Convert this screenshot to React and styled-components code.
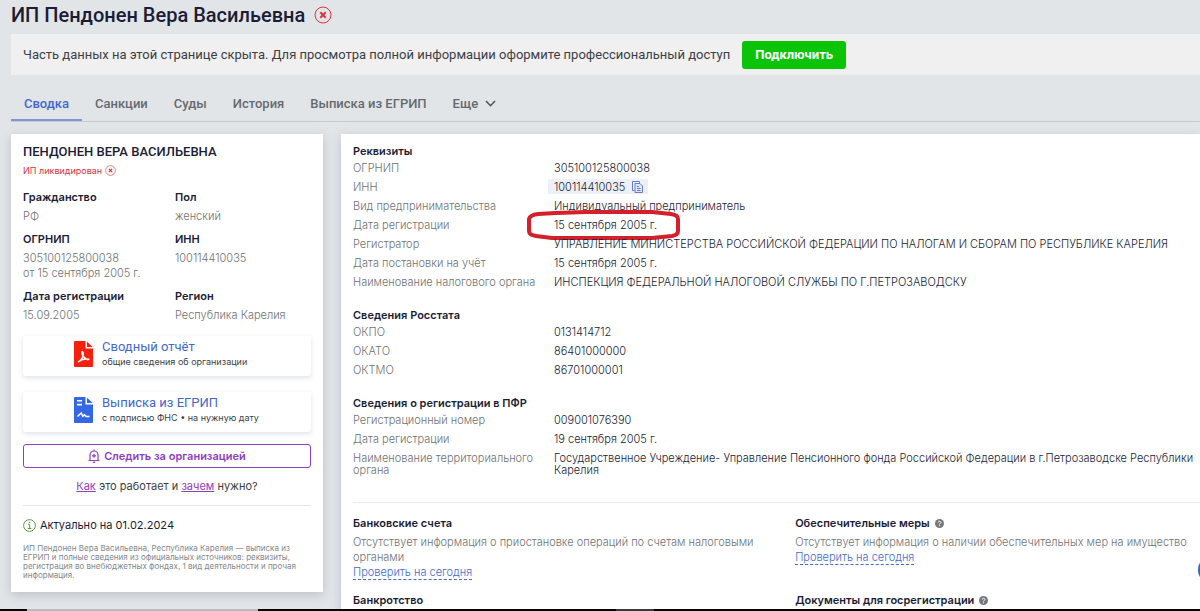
import React from "react";
import styled, { createGlobalStyle } from "styled-components";

const color = {
  page: "#e2e5e8",
  ink: "#1b1c36",
  text: "#3c3e46",
  muted: "#6f7275",
  blue: "#4468d0",
  violet: "#9040bf",
  red: "#d8353d",
};

const display = `Roboto, "Liberation Sans", sans-serif`;

const GlobalStyle = createGlobalStyle`
  *, *::before, *::after { box-sizing: border-box; }
  html, body { margin: 0; height: 100%; overflow: hidden; }
  body {
    background: ${color.page};
    color: ${color.ink};
    font-family: Inter, Roboto, "Liberation Sans", sans-serif;
    font-size: 11px;
  }
  h1, h2, h3, p, dl, dd, dt { margin: 0; }
  button { font-family: inherit; cursor: pointer; }
`;

const Shell = styled.div`
  display: flex;
  flex-direction: column;
  height: 100vh;
`;

const Page = styled.div`
  flex: 1;
  min-height: 0;
  overflow: hidden;
  padding: 3px 0 0 11px;
`;

const Header = styled.header`
  display: flex;
  align-items: center;
  gap: 9px;
  height: 24px;
  font-family: ${display};
`;

const PageTitle = styled.h1`
  font-size: 20px;
  line-height: 24px;
  font-weight: 500;
`;

const Banner = styled.div`
  display: flex;
  align-items: center;
  gap: 12px;
  height: 41px;
  margin-top: 7px;
  padding: 0 12px;
  background: #f0f0f0;
  color: ${color.text};
  font-family: ${display};
  font-size: 13px;
`;

const ConnectButton = styled.button`
  height: 28px;
  padding: 0 13px;
  border: 0;
  border-radius: 3px;
  background: #0bc407;
  color: #fff;
  font-size: 13px;
  font-weight: 700;
`;

const Tabs = styled.nav`
  display: flex;
  align-items: flex-end;
  height: 47px;
  border-bottom: 1px solid #c6cbd1;
  font-family: ${display};
`;

const Tab = styled.a`
  display: flex;
  align-items: center;
  gap: 7px;
  height: 36px;
  padding: 2px 13px 0;
  border-bottom: 2px solid ${(p) => (p.$active ? "#7f98d2" : "transparent")};
  color: ${(p) => (p.$active ? color.blue : "#666a6e")};
  font-size: 13px;
  font-weight: 500;
  text-decoration: none;
`;

const Columns = styled.main`
  display: flex;
  align-items: flex-start;
  gap: 18px;
  margin-top: 12px;
`;

const Card = styled.aside`
  flex: 0 0 312px;
  padding: 10px 12px 12px;
  background: #fff;
  box-shadow: 0 3px 10px rgba(60, 70, 90, 0.22);
`;

const CardTitle = styled.h2`
  font-family: ${display};
  font-size: 13px;
  line-height: 16px;
  font-weight: 500;
`;

const Status = styled.p`
  display: flex;
  align-items: center;
  gap: 3px;
  height: 12px;
  margin-top: 4px;
  color: ${color.red};
  font-size: 9px;
`;

const Facts = styled.dl`
  display: grid;
  grid-template-columns: 152px 1fr;
  row-gap: 8px;
  margin-top: 14px;
`;

const FactName = styled.dt`
  margin-bottom: 5px;
  font-size: 11px;
  line-height: 14px;
  font-weight: 600;
`;

const FactValue = styled.dd`
  color: ${color.muted};
  font-size: 11px;
  line-height: 15px;
  font-weight: 300;
`;

const Reports = styled.div`
  display: grid;
  gap: 16px;
  margin: 13px 0 12px;
`;

const Report = styled.a`
  display: flex;
  align-items: center;
  gap: 9px;
  height: 40px;
  padding: 0 0 4px 51px;
  border-radius: 3px;
  box-shadow: 0 2px 5px rgba(60, 80, 110, 0.16);
  color: ${color.text};
  text-decoration: none;
`;

const ReportName = styled.span`
  display: block;
  color: ${color.blue};
  font-family: ${display};
  font-size: 13px;
  line-height: 16px;
`;

const ReportNote = styled.span`
  display: block;
  font-size: 9px;
  line-height: 14px;
`;

const FollowButton = styled.button`
  display: flex;
  align-items: center;
  justify-content: center;
  gap: 4px;
  width: 100%;
  height: 24px;
  padding: 0;
  border: 1px solid ${color.violet};
  border-radius: 3px;
  background: #fff;
  color: ${color.violet};
  font-size: 11px;
  font-weight: 600;
`;

const HowLine = styled.p`
  margin-top: 10px;
  padding-bottom: 11px;
  border-bottom: 1px solid #e6e6e9;
  color: ${color.text};
  font-size: 11px;
  line-height: 16px;
  text-align: center;

  a { color: ${color.violet}; }
`;

const Actual = styled.p`
  display: flex;
  align-items: center;
  gap: 4px;
  height: 16px;
  margin-top: 11px;
  font-size: 11px;
`;

const Summary = styled.p`
  margin-top: 11px;
  color: #85888b;
  font-size: 8px;
  line-height: 9px;
`;

const Details = styled.section`
  flex: 1;
  min-width: 0;
  padding: 10px 0 12px 12px;
  background: #fff;
  box-shadow: 0 3px 10px rgba(60, 70, 90, 0.22);
`;

const Group = styled.section`
  & + & { margin-top: 20px; }
`;

const SectionTitle = styled.h3`
  display: flex;
  align-items: center;
  gap: 5px;
  font-size: 11px;
  line-height: 14px;
  font-weight: 600;
`;

const Rows = styled.dl`
  display: grid;
  grid-template-columns: 201px 1fr;
  row-gap: 7px;
  margin-top: 4px;
  font-size: 11px;
  line-height: 12px;
`;

const RowName = styled.dt`
  color: ${color.muted};
  font-weight: 300;
`;

const RowValue = styled.dd`
  position: relative;
  font-weight: 350;
`;

const CopyField = styled.span`
  display: flex;
  width: fit-content;
  align-items: center;
  gap: 7px;
  height: 15px;
  margin: -2px 0 -1px -6px;
  padding: 0 5px 0 6px;
  background: #edf0f6;
`;

const CopyButton = styled.button`
  display: flex;
  padding: 0;
  border: 0;
  background: none;
`;

const Marker = styled.svg`
  position: absolute;
  left: -28px;
  top: -9px;
  overflow: visible;
`;

const Checks = styled.div`
  display: grid;
  grid-template-columns: 52.2% 1fr;
  row-gap: 13px;
  margin-top: 26px;
  padding-top: 13px;
  border-top: 1px solid #ececef;
`;

const Check = styled.section`
  padding-right: 12px;
  font-size: 11px;
  line-height: 15px;
  font-weight: 300;
`;

const CheckText = styled.p`
  margin-top: 5px;
  color: ${color.muted};
`;

const CheckLink = styled.a`
  display: inline-block;
  height: 15px;
  border-bottom: 1px dashed ${color.blue};
  color: ${color.blue};
  text-decoration: none;
`;

const ChatButton = styled.button`
  position: fixed;
  right: -26px;
  bottom: 27px;
  width: 28px;
  height: 28px;
  padding: 0;
  border: 0;
  border-radius: 50%;
  background: #3565d8;
`;

const Taskbar = styled.div`
  display: grid;
  grid-template-columns: 27px 231px 358px 38px 1fr;
  flex: 0 0 2px;
  background: #050505;
`;

const TaskItem = styled.span`
  grid-column: ${(p) => p.$column};
  background: ${(p) => p.$tone};
`;

const Cross = ({ size }) => (
  <svg width={size} height={size} viewBox="0 0 18 18" fill="none" stroke={color.red} aria-hidden="true">
    <circle cx="9" cy="9" r="8" strokeWidth="1" />
    <path d="M6.3 6.3l5.4 5.4M11.7 6.3l-5.4 5.4" strokeWidth="2" />
  </svg>
);

const Chevron = () => (
  <svg width="11" height="7" viewBox="0 0 11 7" fill="none" stroke="#4f5357" strokeWidth="1.6" aria-hidden="true">
    <path d="M1 1l4.5 4.7L10 1" />
  </svg>
);

const PdfIcon = () => (
  <svg width="19" height="26" viewBox="0 0 19 26" aria-hidden="true">
    <path d="M1 0h10.5v7.5H19V25a1 1 0 0 1-1 1H1a1 1 0 0 1-1-1V1a1 1 0 0 1 1-1z" fill="#f91f0d" />
    <path d="M13 0.5L18.6 6H13z" fill="#f91f0d" />
    <path
      d="M8 10.8c2 .2 1.3 4-.1 6.600-1 1.800-2.200 3.200-3.300 3.400M4.600 20.800c2-2.400 5.600-3.400 10.200-2.600M8 10.800c-.6 3.400 2 6 5.800 8"
      fill="none"
      stroke="#fff"
      strokeWidth="1.5"
      strokeLinecap="round"
    />
  </svg>
);

const SignedIcon = () => (
  <svg width="19" height="26" viewBox="0 0 19 26" aria-hidden="true">
    <path d="M1 0h10.5v7.5H19V25a1 1 0 0 1-1 1H1a1 1 0 0 1-1-1V1a1 1 0 0 1 1-1z" fill="#3467e4" />
    <path d="M13 0.5L18.6 6H13z" fill="#3467e4" />
    <path d="M3 3.8h5M3 7.6h5" stroke="#fff" strokeWidth="1.6" />
    <path d="M3.500 19.500l3.700-3.500 1.600 3.200 1.800-1.500 1.400 1.800h3.500" fill="none" stroke="#fff" strokeWidth="1.5" />
  </svg>
);

const Bell = () => (
  <svg width="12" height="14" viewBox="0 0 12 14" fill="none" stroke={color.violet} aria-hidden="true">
    <path d="M2 11V6a4 4 0 0 1 8 0v5M0.5 11.5h11M6 2V.5M6 4.8v4M4 6.8h4" strokeWidth="1.2" />
    <path d="M4.8 13.3h2.4" strokeWidth="1.3" />
  </svg>
);

const Info = () => (
  <svg width="13" height="13" viewBox="0 0 13 13" fill="none" stroke="#5d9a49" aria-hidden="true">
    <circle cx="6.5" cy="6.5" r="5.9" />
    <path d="M5 5.3h1.7v4M4.8 9.5h3.6" />
    <path d="M6 3.3h1.3" strokeWidth="1.3" />
  </svg>
);

const Copy = () => (
  <svg width="11" height="12" viewBox="0 0 11 12" fill="none" stroke="#6580cd" aria-hidden="true">
    <path d="M2.5 9.5h-2v-9h7v1.5" />
    <path d="M3 2.5h5l2.5 2.5v6.5H3z" fill="#dfe6f8" />
    <path d="M5 5.5h2M5 7.5h3.5M5 9.5h3.5" />
  </svg>
);

const Hint = () => (
  <svg width="9" height="9" viewBox="0 0 9 9" role="img" aria-label="Подсказка">
    <circle cx="4.5" cy="4.5" r="4.5" fill="#74777b" />
    <path d="M3.2 3.5c0-1.7 2.7-1.6 2.7 0 0 1-1.4 1-1.4 2M4.5 6.3v1" fill="none" stroke="#fff" />
  </svg>
);

const tabs = ["Сводка", "Санкции", "Суды", "История", "Выписка из ЕГРИП"];

const facts = [
  ["Гражданство", "РФ"],
  ["Пол", "женский"],
  ["ОГРНИП", "305100125800038", "от 15 сентября 2005 г."],
  ["ИНН", "100114410035"],
  ["Дата регистрации", "15.09.2005"],
  ["Регион", "Республика Карелия"],
];

const groups = [
  {
    title: "Реквизиты",
    rows: [
      { name: "ОГРНИП", value: "305100125800038" },
      { name: "ИНН", value: "100114410035", copy: true },
      { name: "Вид предпринимательства", value: "Индивидуальный предприниматель" },
      { name: "Дата регистрации", value: "15 сентября 2005 г.", marked: true },
      { name: "Регистратор", value: "УПРАВЛЕНИЕ МИНИСТЕРСТВА РОССИЙСКОЙ ФЕДЕРАЦИИ ПО НАЛОГАМ И СБОРАМ ПО РЕСПУБЛИКЕ КАРЕЛИЯ" },
      { name: "Дата постановки на учёт", value: "15 сентября 2005 г." },
      { name: "Наименование налогового органа", value: "ИНСПЕКЦИЯ ФЕДЕРАЛЬНОЙ НАЛОГОВОЙ СЛУЖБЫ ПО Г.ПЕТРОЗАВОДСКУ" },
    ],
  },
  {
    title: "Сведения Росстата",
    rows: [
      { name: "ОКПО", value: "0131414712" },
      { name: "ОКАТО", value: "86401000000" },
      { name: "ОКТМО", value: "86701000001" },
    ],
  },
  {
    title: "Сведения о регистрации в ПФР",
    rows: [
      { name: "Регистрационный номер", value: "009001076390" },
      { name: "Дата регистрации", value: "19 сентября 2005 г." },
      {
        name: "Наименование территориального органа",
        value:
          "Государственное Учреждение- Управление Пенсионного фонда Российской Федерации в г.Петрозаводске Республики Карелия",
      },
    ],
  },
];

const checks = [
  { title: "Банковские счета", text: "Отсутствует информация о приостановке операций по счетам налоговыми органами" },
  { title: "Обеспечительные меры", hint: true, text: "Отсутствует информация о наличии обеспечительных мер на имущество" },
  { title: "Банкротство" },
  { title: "Документы для госрегистрации", hint: true },
];

function Value({ row }) {
  if (row.copy) {
    return (
      <RowValue>
        <CopyField>
          {row.value}
          <CopyButton aria-label="Скопировать">
            <Copy />
          </CopyButton>
        </CopyField>
      </RowValue>
    );
  }
  return (
    <RowValue>
      {row.value}
      {row.marked && (
        <Marker width="156" height="30" viewBox="0 0 156 30" fill="none" aria-hidden="true">
          <path
            d="M12 4L30 3 60 2H126L145 4Q152 5 152 9V21Q152 25 146 26L126 28H26L10 26Q3 25 3 21V9Q4 5 12 4z"
            stroke="#d4202a"
            strokeWidth="4"
            strokeLinejoin="round"
          />
        </Marker>
      )}
    </RowValue>
  );
}

export default function App() {
  return (
    <Shell>
      <GlobalStyle />
      <Page>
        <Header>
          <PageTitle>ИП Пендонен Вера Васильевна</PageTitle>
          <Cross size={18} />
        </Header>
        <Banner>
          <span>
            Часть данных на этой странице скрыта. Для просмотра полной информации оформите профессиональный доступ
          </span>
          <ConnectButton>Подключить</ConnectButton>
        </Banner>
        <Tabs>
          {tabs.map((name, i) => (
            <Tab key={name} href="#" $active={i === 0}>
              {name}
            </Tab>
          ))}
          <Tab href="#">
            Еще <Chevron />
          </Tab>
        </Tabs>
        <Columns>
          <Card>
            <CardTitle>ПЕНДОНЕН ВЕРА ВАСИЛЬЕВНА</CardTitle>
            <Status>
              ИП ликвидирован <Cross size={11} />
            </Status>
            <Facts>
              {facts.map(([name, ...values]) => (
                <div key={name}>
                  <FactName>{name}</FactName>
                  {values.map((v) => (
                    <FactValue key={v}>{v}</FactValue>
                  ))}
                </div>
              ))}
            </Facts>
            <Reports>
              <Report href="#">
                <PdfIcon />
                <span>
                  <ReportName>Сводный отчёт</ReportName>
                  <ReportNote>общие сведения об организации</ReportNote>
                </span>
              </Report>
              <Report href="#">
                <SignedIcon />
                <span>
                  <ReportName>Выписка из ЕГРИП</ReportName>
                  <ReportNote>с подписью ФНС • на нужную дату</ReportNote>
                </span>
              </Report>
            </Reports>
            <FollowButton>
              <Bell />
              Следить за организацией
            </FollowButton>
            <HowLine>
              <a href="#">Как</a> это работает и <a href="#">зачем</a> нужно?
            </HowLine>
            <Actual>
              <Info />
              Актуально на 01.02.2024
            </Actual>
            <Summary>
              ИП Пендонен Вера Васильевна, Республика Карелия — выписка из ЕГРИП и полные сведения из официальных
              источников: реквизиты, регистрация во внебюджетных фондах, 1 вид деятельности и прочая информация.
            </Summary>
          </Card>
          <Details>
            {groups.map((group) => (
              <Group key={group.title}>
                <SectionTitle>{group.title}</SectionTitle>
                <Rows>
                  {group.rows.map((row) => (
                    <React.Fragment key={row.name}>
                      <RowName>{row.name}</RowName>
                      <Value row={row} />
                    </React.Fragment>
                  ))}
                </Rows>
              </Group>
            ))}
            <Checks>
              {checks.map((check) => (
                <Check key={check.title}>
                  <SectionTitle>
                    {check.title}
                    {check.hint && <Hint />}
                  </SectionTitle>
                  {check.text && (
                    <>
                      <CheckText>{check.text}</CheckText>
                      <CheckLink href="#">Проверить на сегодня</CheckLink>
                    </>
                  )}
                </Check>
              ))}
            </Checks>
          </Details>
        </Columns>
      </Page>
      <ChatButton aria-label="Чат" />
      <Taskbar>
        <TaskItem $column={2} $tone="#b9bbbd" />
        <TaskItem $column={4} $tone="#3a3b3d" />
      </Taskbar>
    </Shell>
  );
}
